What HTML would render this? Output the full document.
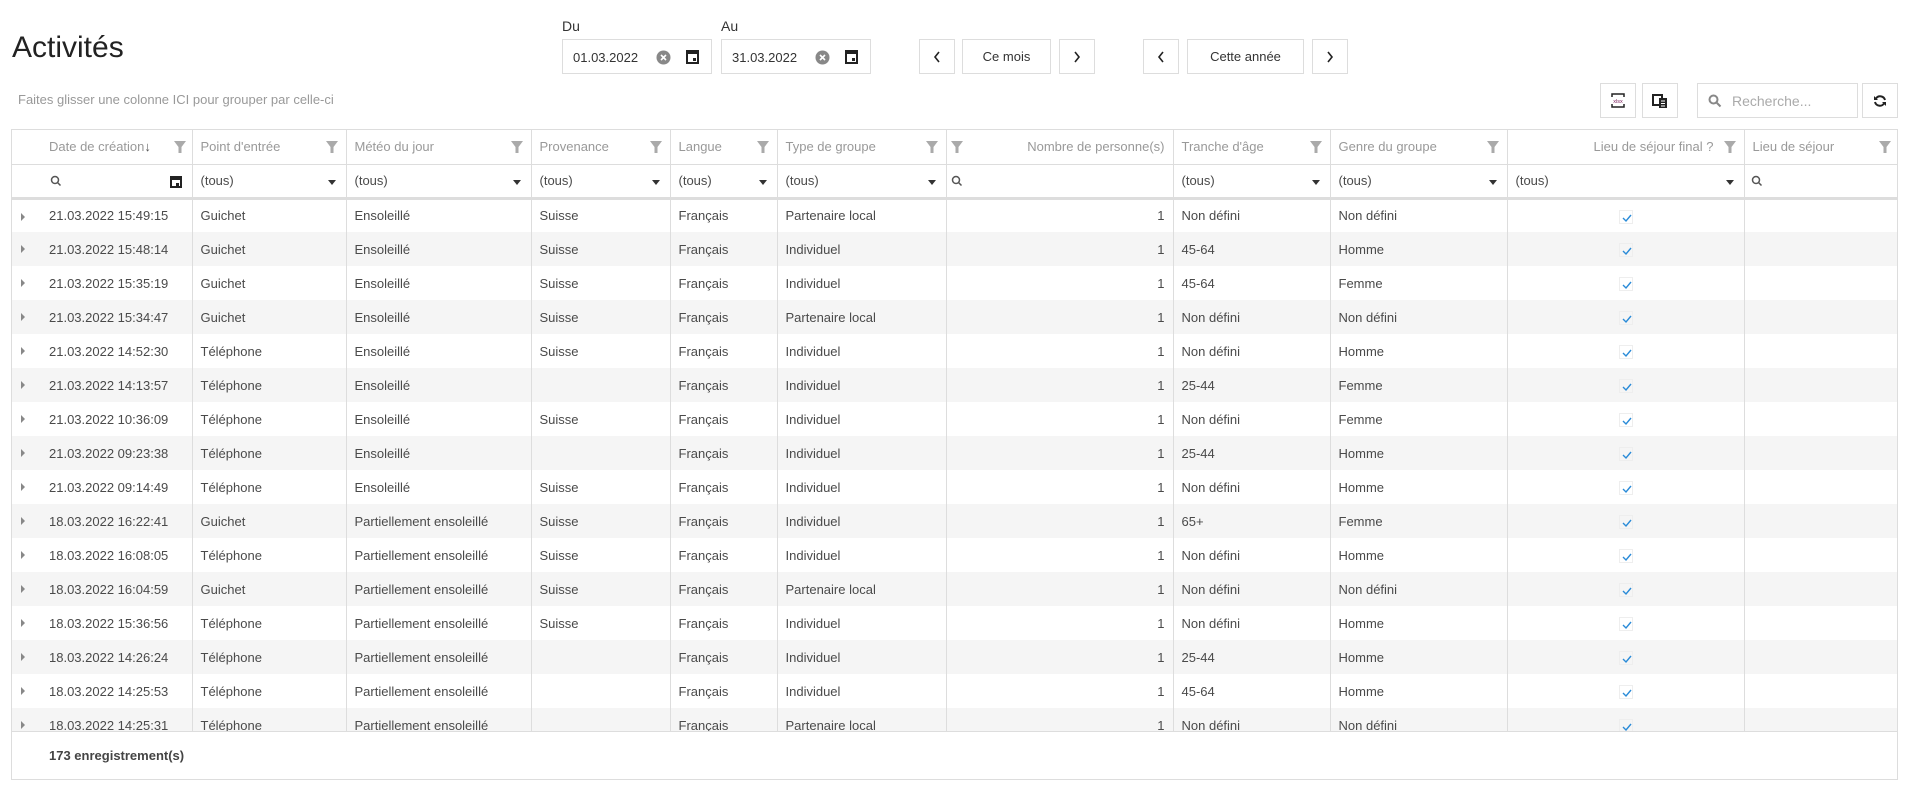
<!DOCTYPE html>
<html><head><meta charset="utf-8">
<style>
*{box-sizing:border-box;margin:0;padding:0}
body{width:1911px;height:792px;background:#fff;font-family:"Liberation Sans",sans-serif;color:#444;position:relative;overflow:hidden;font-size:13px}
.abs{position:absolute}
.box{position:absolute;border:1px solid #ddd;background:#fff}
.btn{position:absolute;border:1px solid #ddd;background:#fff;display:flex;align-items:center;justify-content:center;color:#333;font-size:13px}
table{border-collapse:collapse;table-layout:fixed;width:1887px}
td{border-left:1px solid #ddd;height:34px;padding:0 8px;white-space:nowrap;overflow:hidden;color:#4a4a4a}
td:first-child{border-left:none}
.hd td{color:#999;position:relative}
.flt{position:absolute;top:11px;width:12px;height:12px}
tr.alt td{background:#f5f5f5}
.r{text-align:right}
.c{text-align:center}
.chk{display:inline-block;width:14px;height:14px;border:1px solid #eee;vertical-align:middle;position:relative}
.caret{position:absolute;right:10px;top:15px;width:0;height:0;border-left:4px solid transparent;border-right:4px solid transparent;border-top:5px solid #333}
</style></head><body>
<div class="abs" style="left:12px;top:31px;font-size:30px;color:#222;font-weight:300">Activités</div>
<div class="abs" style="left:562px;top:18px;font-size:14px;color:#333">Du</div>
<div class="abs" style="left:721px;top:18px;font-size:14px;color:#333">Au</div>
<div class="box" style="left:562px;top:39px;width:150px;height:35px"><span class="abs" style="left:10px;top:10px;color:#333">01.03.2022</span>
<svg class="abs" style="left:93px;top:10px" width="15" height="15"><circle cx="7.5" cy="7.5" r="7" fill="#888"/><path d="M5 5l5 5M10 5l-5 5" stroke="#fff" stroke-width="1.6"/></svg>
<svg class="abs" style="left:123px;top:9px" width="13" height="15"><rect x="1" y="2" width="11" height="12" fill="none" stroke="#222" stroke-width="2"/><rect x="1" y="2" width="11" height="3" fill="#222"/><rect x="7" y="9" width="3" height="3" fill="#222"/></svg></div>
<div class="box" style="left:721px;top:39px;width:150px;height:35px"><span class="abs" style="left:10px;top:10px;color:#333">31.03.2022</span>
<svg class="abs" style="left:93px;top:10px" width="15" height="15"><circle cx="7.5" cy="7.5" r="7" fill="#888"/><path d="M5 5l5 5M10 5l-5 5" stroke="#fff" stroke-width="1.6"/></svg>
<svg class="abs" style="left:123px;top:9px" width="13" height="15"><rect x="1" y="2" width="11" height="12" fill="none" stroke="#222" stroke-width="2"/><rect x="1" y="2" width="11" height="3" fill="#222"/><rect x="7" y="9" width="3" height="3" fill="#222"/></svg></div>
<div class="btn" style="left:919px;top:39px;width:36px;height:35px"><svg width="10" height="14"><path d="M7 2L3 7l4 5" fill="none" stroke="#222" stroke-width="1.6"/></svg></div>
<div class="btn" style="left:962px;top:39px;width:89px;height:35px">Ce mois</div>
<div class="btn" style="left:1059px;top:39px;width:36px;height:35px"><svg width="10" height="14"><path d="M3 2l4 5-4 5" fill="none" stroke="#222" stroke-width="1.6"/></svg></div>
<div class="btn" style="left:1143px;top:39px;width:36px;height:35px"><svg width="10" height="14"><path d="M7 2L3 7l4 5" fill="none" stroke="#222" stroke-width="1.6"/></svg></div>
<div class="btn" style="left:1187px;top:39px;width:117px;height:35px">Cette année</div>
<div class="btn" style="left:1312px;top:39px;width:36px;height:35px"><svg width="10" height="14"><path d="M3 2l4 5-4 5" fill="none" stroke="#222" stroke-width="1.6"/></svg></div>
<div class="abs" style="left:18px;top:92px;color:#999;font-size:13px">Faites glisser une colonne ICI pour grouper par celle-ci</div>
<div class="btn" style="left:1600px;top:83px;width:36px;height:35px"><svg width="14" height="15"><path d="M1 4V1h12v3M1 11v3h12v-3" fill="none" stroke="#222" stroke-width="1.5"/><text x="7" y="10" font-size="5.5" text-anchor="middle" fill="#7a1a5a" font-family="Liberation Sans">xlsx</text></svg></div>
<div class="btn" style="left:1642px;top:83px;width:36px;height:35px"><svg width="16" height="14"><rect x="1" y="1" width="9" height="10" fill="none" stroke="#222" stroke-width="2"/><rect x="7" y="4" width="8" height="10" fill="#222"/><path d="M9 7h4M9 9.5h4M9 12h4" stroke="#fff"/></svg></div>
<div class="box" style="left:1697px;top:83px;width:161px;height:35px"><svg class="abs" style="left:10px;top:10px" width="14" height="14"><circle cx="5.5" cy="5.5" r="4" fill="none" stroke="#888" stroke-width="2"/><path d="M8.5 8.5l4 4" stroke="#888" stroke-width="2"/></svg><span class="abs" style="left:34px;top:9px;color:#aaa;font-size:14px">Recherche...</span></div>
<div class="btn" style="left:1862px;top:83px;width:36px;height:35px"><svg width="14" height="14"><path d="M12 6A5 5 0 0 0 3 4.5M2 8a5 5 0 0 0 9 1.5" fill="none" stroke="#222" stroke-width="2"/><path d="M1 2v4h4zM13 12V8H9z" fill="#222"/></svg></div>

<div class="abs" style="left:11px;top:129px;width:1887px;height:651px;border:1px solid #ddd;border-top:none;border-left:1px solid #ddd"></div>
<div class="abs" style="left:11px;top:129px;width:1887px;border:1px solid #ddd;border-bottom:none;overflow:hidden;height:602px">
<table>
<colgroup><col style="width:180px"><col style="width:154px"><col style="width:185px"><col style="width:139px"><col style="width:107px"><col style="width:169px"><col style="width:227px"><col style="width:157px"><col style="width:177px"><col style="width:237px"><col style="width:155px"></colgroup>
<tr class="hd" style="border-bottom:1px solid #ddd">
<td style="padding-left:37px">Date de création<span style="color:#555">↓</span><svg class="flt" style="right:6px" viewBox="0 0 12 12"><path d="M0 0h12L7.5 6v6h-3V6z" fill="#aaa"/></svg></td>
<td>Point d'entrée<svg class="flt" style="right:8px" viewBox="0 0 12 12"><path d="M0 0h12L7.5 6v6h-3V6z" fill="#aaa"/></svg></td>
<td>Météo du jour<svg class="flt" style="right:8px" viewBox="0 0 12 12"><path d="M0 0h12L7.5 6v6h-3V6z" fill="#aaa"/></svg></td>
<td>Provenance<svg class="flt" style="right:8px" viewBox="0 0 12 12"><path d="M0 0h12L7.5 6v6h-3V6z" fill="#aaa"/></svg></td>
<td>Langue<svg class="flt" style="right:8px" viewBox="0 0 12 12"><path d="M0 0h12L7.5 6v6h-3V6z" fill="#aaa"/></svg></td>
<td>Type de groupe<svg class="flt" style="right:8px" viewBox="0 0 12 12"><path d="M0 0h12L7.5 6v6h-3V6z" fill="#aaa"/></svg></td>
<td class="r"><svg class="flt" style="left:4px" viewBox="0 0 12 12"><path d="M0 0h12L7.5 6v6h-3V6z" fill="#aaa"/></svg>Nombre de personne(s)</td>
<td>Tranche d'âge<svg class="flt" style="right:8px" viewBox="0 0 12 12"><path d="M0 0h12L7.5 6v6h-3V6z" fill="#aaa"/></svg></td>
<td>Genre du groupe<svg class="flt" style="right:8px" viewBox="0 0 12 12"><path d="M0 0h12L7.5 6v6h-3V6z" fill="#aaa"/></svg></td>
<td class="r" style="padding-right:30px">Lieu de séjour final ?<svg class="flt" style="right:8px" viewBox="0 0 12 12"><path d="M0 0h12L7.5 6v6h-3V6z" fill="#aaa"/></svg></td>
<td>Lieu de séjour<svg class="flt" style="right:8px" viewBox="0 0 12 12"><path d="M0 0h12L7.5 6v6h-3V6z" fill="#aaa"/></svg></td>
</tr>
<tr style="border-bottom:3px solid #ddd">
<td style="position:relative"><svg class="abs" style="left:38px;top:10px" width="12" height="12"><circle cx="5" cy="5" r="3.5" fill="none" stroke="#555" stroke-width="1.5"/><path d="M7.5 7.5l3 3" stroke="#555" stroke-width="1.5"/></svg><svg class="abs" style="left:158px;top:10px" width="12" height="13"><rect x="1" y="2" width="10" height="10" fill="none" stroke="#222" stroke-width="2"/><rect x="1" y="2" width="10" height="3" fill="#222"/><rect x="6" y="8" width="3" height="3" fill="#222"/></svg></td>
<td style="position:relative">(tous)<span class="caret"></span></td>
<td style="position:relative">(tous)<span class="caret"></span></td>
<td style="position:relative">(tous)<span class="caret"></span></td>
<td style="position:relative">(tous)<span class="caret"></span></td>
<td style="position:relative">(tous)<span class="caret"></span></td>
<td style="position:relative"><svg class="abs" style="left:4px;top:10px" width="12" height="12"><circle cx="5" cy="5" r="3.5" fill="none" stroke="#555" stroke-width="1.5"/><path d="M7.5 7.5l3 3" stroke="#555" stroke-width="1.5"/></svg></td>
<td style="position:relative">(tous)<span class="caret"></span></td>
<td style="position:relative">(tous)<span class="caret"></span></td>
<td style="position:relative">(tous)<span class="caret"></span></td>
<td style="position:relative"><svg class="abs" style="left:6px;top:10px" width="12" height="12"><circle cx="5" cy="5" r="3.5" fill="none" stroke="#555" stroke-width="1.5"/><path d="M7.5 7.5l3 3" stroke="#555" stroke-width="1.5"/></svg></td>
</tr>
<tbody id="rows"></tbody>
</table>
</div>
<div class="abs" style="left:12px;top:731px;width:1885px;border-top:1px solid #ddd"></div>
<div class="abs" style="left:49px;top:748px;font-weight:bold;color:#444;font-size:13px">173 enregistrement(s)</div>
<script>
var d=[["21.03.2022 15:49:15","Guichet","Ensoleillé","Suisse","Partenaire local","Non défini","Non défini"],
["21.03.2022 15:48:14","Guichet","Ensoleillé","Suisse","Individuel","45-64","Homme"],
["21.03.2022 15:35:19","Guichet","Ensoleillé","Suisse","Individuel","45-64","Femme"],
["21.03.2022 15:34:47","Guichet","Ensoleillé","Suisse","Partenaire local","Non défini","Non défini"],
["21.03.2022 14:52:30","Téléphone","Ensoleillé","Suisse","Individuel","Non défini","Homme"],
["21.03.2022 14:13:57","Téléphone","Ensoleillé","","Individuel","25-44","Femme"],
["21.03.2022 10:36:09","Téléphone","Ensoleillé","Suisse","Individuel","Non défini","Femme"],
["21.03.2022 09:23:38","Téléphone","Ensoleillé","","Individuel","25-44","Homme"],
["21.03.2022 09:14:49","Téléphone","Ensoleillé","Suisse","Individuel","Non défini","Homme"],
["18.03.2022 16:22:41","Guichet","Partiellement ensoleillé","Suisse","Individuel","65+","Femme"],
["18.03.2022 16:08:05","Téléphone","Partiellement ensoleillé","Suisse","Individuel","Non défini","Homme"],
["18.03.2022 16:04:59","Guichet","Partiellement ensoleillé","Suisse","Partenaire local","Non défini","Non défini"],
["18.03.2022 15:36:56","Téléphone","Partiellement ensoleillé","Suisse","Individuel","Non défini","Homme"],
["18.03.2022 14:26:24","Téléphone","Partiellement ensoleillé","","Individuel","25-44","Homme"],
["18.03.2022 14:25:53","Téléphone","Partiellement ensoleillé","","Individuel","45-64","Homme"],
["18.03.2022 14:25:31","Téléphone","Partiellement ensoleillé","","Partenaire local","Non défini","Non défini"]];
var h="";
d.forEach(function(r,i){
h+='<tr'+(i%2?' class="alt"':'')+'><td style="position:relative;padding-left:37px"><span class="abs" style="left:9px;top:13px;border-top:4px solid transparent;border-bottom:4px solid transparent;border-left:4px solid #888"></span>'+r[0]+'</td><td>'+r[1]+'</td><td>'+r[2]+'</td><td>'+r[3]+'</td><td>Français</td><td>'+r[4]+'</td><td class="r">1</td><td>'+r[5]+'</td><td>'+r[6]+'</td><td class="c"><span class="chk"><svg class="abs" style="left:2px;top:2px" width="10" height="10"><path d="M1 5l3 3 5-6" fill="none" stroke="#2a8bd8" stroke-width="1.4"/></svg></span></td><td></td></tr>';});
document.getElementById("rows").innerHTML=h;
</script>
</body></html>
